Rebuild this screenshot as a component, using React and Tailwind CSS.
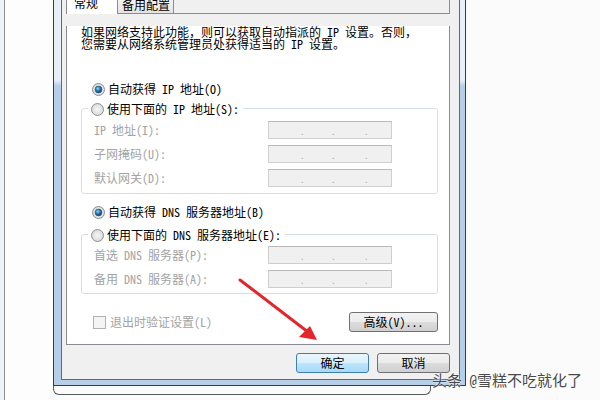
import React from 'react';

const font = { fontFamily: '"Noto Sans Mono CJK SC", "Noto Sans CJK SC", sans-serif' };

const Radio = ({ checked }) => (
  <svg width="13" height="13" viewBox="0 0 13 13" className="shrink-0">
    <defs>
      <radialGradient id="rOuter" cx="50%" cy="50%" r="60%">
        <stop offset="0" stopColor="#f6f6f6" />
        <stop offset="1" stopColor="#d4d4d4" />
      </radialGradient>
      <radialGradient id="rDot" cx="40%" cy="35%" r="65%">
        <stop offset="0" stopColor="#9fd6f5" />
        <stop offset="0.5" stopColor="#2a7bb4" />
        <stop offset="1" stopColor="#0f3f6e" />
      </radialGradient>
    </defs>
    <circle cx="6.5" cy="6.5" r="6" fill="url(#rOuter)" stroke="#8e8f8f" />
    {checked && <circle cx="6.5" cy="6.5" r="3.4" fill="url(#rDot)" stroke="#20507e" strokeWidth="0.6" />}
  </svg>
);

const IpBox = () => (
  <div className="w-[124px] h-[18px] bg-[#f0f0f0] border border-[#cfcfcf] border-t-[#b9b9b9] flex items-end pb-[2px] text-[#a8a8a8] text-[9px] leading-[9px]">
    <span className="ml-[31px] w-[2px]">.</span>
    <span className="ml-[29px] w-[2px]">.</span>
    <span className="ml-[31px] w-[2px]">.</span>
  </div>
);

const Field = ({ label }) => (
  <div className="flex items-center h-[18px]">
    <span className="w-[174px] text-[#a3a3a3]">{label}</span>
    <IpBox />
  </div>
);

const WinButton = ({ children, active, w = 'w-[73px]' }) => (
  <div
    className={`${w} h-[20px] rounded-[3px] border flex items-center justify-center text-black ${
      active
        ? 'border-[#3c7fb1] bg-[linear-gradient(to_bottom,#eaf6fd_0,#d9f0fc_50%,#bee6fd_51%,#a7d9f5_100%)]'
        : 'border-[#707070] bg-[linear-gradient(to_bottom,#f2f2f2_0,#ebebeb_50%,#dddddd_51%,#cfcfcf_100%)]'
    }`}
  >
    {children}
  </div>
);

export default function App() {
  return (
    <div className="relative w-[600px] h-[400px] overflow-hidden flex bg-[#fbfbfb] text-[12px] leading-[12px]" style={font}>
      <div className="w-[4px] bg-[#eef3fa]" />
      <div className="w-px bg-[#8d8d8d]" />
      <div className="w-[48px] bg-[#fdfdfd]" />

      <div className="w-[413px] flex flex-col">
        <div className="border-x border-b border-[#3b3b3b] pl-[7px] pr-[5px] pb-[5px] bg-[linear-gradient(to_bottom,#e9eff7_0,#e9eff7_80px,#b6cfe9_86px,#b6cfe9_100%)]">
          <div className="border-x border-b border-[#5e6a78] bg-[#f0f0f0] pl-[4px] pr-[9px] pb-[6px]">
            {/* tabs */}
            <div className="flex h-[14px]">
              <div className="w-[51px] border-l border-[#898c95] bg-white pl-[7px] overflow-hidden">
                <div className="-mt-[3px]">常规</div>
              </div>
              <div className="w-[57px] border-x border-b border-[#898c95] bg-[linear-gradient(to_bottom,#f3f3f3,#e3e3e3)] pl-[4px] overflow-hidden">
                <div className="-mt-[1px]">备用配置</div>
              </div>
              <div className="flex-1 border-b border-r border-[#898c95]" />
            </div>

            {/* panel */}
            <div className="border-x border-b border-[#898c95] bg-white pl-[14px] pr-[11px] pb-[12px]">
              <div className="mt-[12px] text-black">
                <div>如果网络支持此功能，则可以获取自动指派的 IP 设置。否则，</div>
                <div>您需要从网络系统管理员处获得适当的 IP 设置。</div>
              </div>

              <div className="mt-[31px] h-[16px] flex items-center gap-[3px] pl-[11px]">
                <Radio checked />
                <span>自动获得 IP 地址(O)</span>
              </div>

              <div className="mt-[11px] border border-[#d5dfe5] rounded-[3px] pl-[12px] pb-[6px]">
                <div className="-mt-[8px] -ml-[6px] h-[16px] flex">
                  <div className="bg-white flex items-center gap-[3px] pl-[3px] pr-[4px]">
                    <Radio />
                    <span>使用下面的 IP 地址(S):</span>
                  </div>
                </div>
                <div className="mt-[4px] flex flex-col gap-[6px]">
                  <Field label="IP 地址(I):" />
                  <Field label="子网掩码(U):" />
                  <Field label="默认网关(D):" />
                </div>
              </div>

              <div className="mt-[10px] h-[16px] flex items-center gap-[3px] pl-[11px]">
                <Radio checked />
                <span>自动获得 DNS 服务器地址(B)</span>
              </div>

              <div className="mt-[14px] border border-[#d5dfe5] rounded-[3px] pl-[12px] pb-[5px]">
                <div className="-mt-[8px] -ml-[6px] h-[16px] flex">
                  <div className="bg-white flex items-center gap-[3px] pl-[3px] pr-[4px]">
                    <Radio />
                    <span>使用下面的 DNS 服务器地址(E):</span>
                  </div>
                </div>
                <div className="mt-[3px] flex flex-col gap-[6px]">
                  <Field label="首选 DNS 服务器(P):" />
                  <Field label="备用 DNS 服务器(A):" />
                </div>
              </div>

              <div className="mt-[18px] h-[20px] flex items-center">
                <div className="ml-[12px] w-[13px] h-[13px] border border-[#b1b1b1] bg-[#f4f4f4]" />
                <span className="ml-[4px] text-[#a3a3a3]">退出时验证设置(L)</span>
                <div className="ml-auto">
                  <WinButton w="w-[89px]">高级(V)...</WinButton>
                </div>
              </div>
            </div>

            <div className="mt-[8px] flex justify-end gap-[8px]">
              <WinButton active>确定</WinButton>
              <WinButton>取消</WinButton>
            </div>
          </div>
        </div>
        <div className="w-[378px] h-[9px] border-x border-b border-[#5a5a5a] rounded-b-[6px]" />
      </div>

      <div className="flex-1" />

      <svg className="absolute inset-0 pointer-events-none" width="600" height="400">
        <line x1="240" y1="280" x2="308" y2="332" stroke="#e3262b" strokeWidth="3" strokeLinecap="round" />
        <polygon points="317,340 299,337 310,326" fill="#e3262b" />
      </svg>

      <div
        className="absolute left-[432px] top-[372px] text-[15px] leading-[16px] text-[#4a4a4a] whitespace-nowrap"
        style={{ textShadow: '0 0 2px #fff, 0 0 1px #fff' }}
      >
        头条 @雪糕不吃就化了
      </div>
    </div>
  );
}
